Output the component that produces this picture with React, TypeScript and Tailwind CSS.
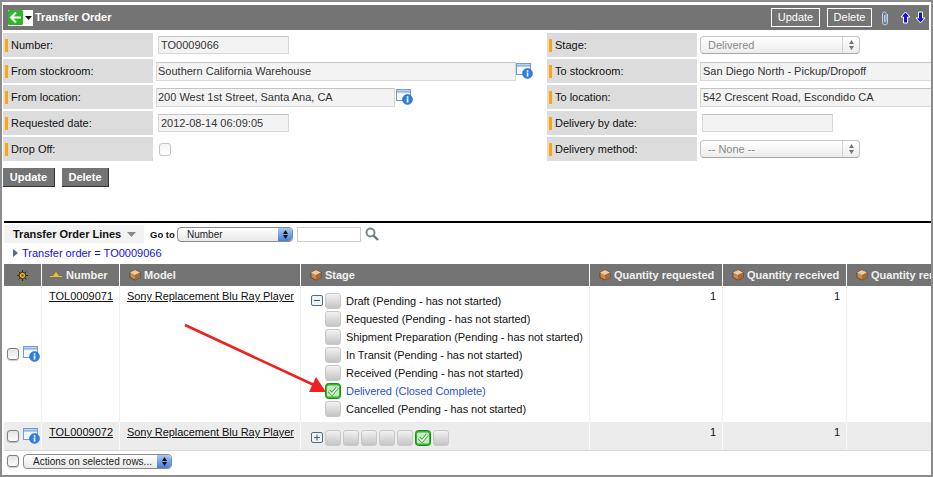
import React from "react";

const font = { fontFamily: '"Liberation Sans", Arial, sans-serif' };

function InfoIcon() {
  return (
    <svg width="17" height="16" viewBox="0 0 17 16" className="shrink-0">
      <rect x="0.5" y="0.5" width="14" height="11" fill="#f4f8fd" stroke="#6f9bd8" />
      <rect x="0.5" y="0.5" width="14" height="2.5" fill="#bcd3f2" stroke="#6f9bd8" />
      <circle cx="11.5" cy="10.5" r="5" fill="#2f7de0" stroke="#1f5fb8" strokeWidth="0.5" />
      <rect x="10.7" y="9.5" width="1.7" height="4" fill="#fff" />
      <rect x="10.7" y="7.3" width="1.7" height="1.5" fill="#fff" />
    </svg>
  );
}

function Cube() {
  return (
    <svg width="12" height="12" viewBox="0 0 12 12" className="shrink-0">
      <path d="M6 1 L11 3.5 L11 8.5 L6 11 L1 8.5 L1 3.5 Z" fill="#c98a50" stroke="#3a2a1a" strokeWidth="0.6" />
      <path d="M6 1 L11 3.5 L6 6 L1 3.5 Z" fill="#eecb9f" />
      <path d="M6 6 L11 3.5 L11 8.5 L6 11 Z" fill="#a86a35" />
    </svg>
  );
}

function MacCheck({ light }: { light?: boolean }) {
  return (
    <span
      className={
        light
          ? "block w-[12px] h-[13px] rounded-[3px] border border-[#c4c4c4] bg-gradient-to-b from-[#f4f4f4] to-[#ffffff] shrink-0"
          : "block w-[12px] h-[12px] rounded-[3px] border border-[#7f7f7f] bg-gradient-to-b from-[#e4e4e4] to-[#fbfbfb] shadow-[0_1px_1px_rgba(0,0,0,0.2)] shrink-0"
      }
    />
  );
}

function StageBox({ done }: { done?: boolean }) {
  if (done) {
    return (
      <svg width="16" height="16" viewBox="0 0 16 16" className="shrink-0">
        <rect x="0.5" y="0.5" width="15" height="15" rx="3" fill="#35b52e" stroke="#1f8a1a" />
        <rect x="2" y="2.5" width="12" height="11" rx="1.5" fill="#c4ecc0" />
        <path d="M4 8 L7 11 L12.5 4.5" fill="none" stroke="#2f9f28" strokeWidth="3.2" />
        <path d="M4 8 L7 11 L12.5 4.5" fill="none" stroke="#ffffff" strokeWidth="1.6" />
      </svg>
    );
  }
  return <span className="block w-[16px] h-[16px] rounded-[3px] border border-[#c8c8c8] bg-gradient-to-b from-[#f2f2f2] to-[#c4c4c4] shrink-0" />;
}

function Toggle({ plus }: { plus?: boolean }) {
  return (
    <svg width="12" height="12" viewBox="0 0 12 12" className="shrink-0">
      <rect x="0.5" y="0.5" width="11" height="10" rx="1.5" fill="#eef2f5" stroke="#4f6b80" />
      <path d="M3 5.5 H9" stroke="#3f5b70" />
      {plus && <path d="M6 2.5 V8.5" stroke="#3f5b70" />}
    </svg>
  );
}

function Label({ text }: { text: string }) {
  return (
    <div className="w-[150px] h-[24px] bg-[#dcdcdc] flex items-center shrink-0 pl-[2px] text-[#111]">
      <span className="w-[3px] h-[13px] bg-[#fca60d] mr-[3px]" />
      <span>{text}</span>
    </div>
  );
}

function TextBox({ value, w, ml, h = "h-[18px]", pad = "pl-[1px]" }: { value: string; w: string; ml: string; h?: string; pad?: string }) {
  return (
    <div className={`${w} ${ml} ${h} ${pad} flex items-center bg-[#f3f3f3] border border-[#d8d8d8] border-t-[#c4c4c4] text-[#333] shrink-0`}>
      {value}
    </div>
  );
}

function GreySelect({ value }: { value: string }) {
  return (
    <div className="ml-[3px] w-[160px] h-[18px] rounded-[4px] border border-[#c4c4c4] border-b-[#a8a8a8] bg-gradient-to-b from-[#ffffff] to-[#ececec] flex items-center text-[#8a8a8a] pl-[7px] relative">
      <span className="grow">{value}</span>
      <span className="w-[17px] h-full border-l border-[#d4d4d4] flex flex-col items-center justify-center gap-[2px]">
        <svg width="5" height="4" viewBox="0 0 5 4"><path d="M2.5 0 L5 4 L0 4 Z" fill="#777" /></svg>
        <svg width="5" height="4" viewBox="0 0 5 4"><path d="M2.5 4 L5 0 L0 0 Z" fill="#777" /></svg>
      </span>
    </div>
  );
}

function BlueStepper() {
  return (
    <span className="w-[14px] h-full rounded-r-[4px] bg-gradient-to-b from-[#a9c9f2] to-[#3f7fd8] flex flex-col items-center justify-center gap-[1px] shrink-0">
      <svg width="5" height="4" viewBox="0 0 5 4"><path d="M2.5 0 L5 4 L0 4 Z" fill="#111" /></svg>
      <svg width="5" height="4" viewBox="0 0 5 4"><path d="M2.5 4 L5 0 L0 0 Z" fill="#111" /></svg>
    </span>
  );
}

function FormRow({ children }: { children: React.ReactNode }) {
  return <div className="flex items-center h-[24px] mb-[2px]">{children}</div>;
}

function GreyButton({ text, w }: { text: string; w: string }) {
  return (
    <div className={`${w} h-[19px] bg-[#747474] border-b border-r border-[#333] text-white font-bold flex items-center justify-center`}>
      {text}
    </div>
  );
}

function HeadCell({ w, children, noBorder }: { w: string; children: React.ReactNode; noBorder?: boolean }) {
  return (
    <div className={`${w} shrink-0 h-full flex items-center ${noBorder ? "" : "border-r border-white"} text-[#f1f1f1] font-bold overflow-hidden whitespace-nowrap`}>
      {children}
    </div>
  );
}

const stages: [string, boolean][] = [
  ["Draft (Pending - has not started)", false],
  ["Requested (Pending - has not started)", false],
  ["Shipment Preparation (Pending - has not started)", false],
  ["In Transit (Pending - has not started)", false],
  ["Received (Pending - has not started)", false],
  ["Delivered (Closed Complete)", true],
  ["Cancelled (Pending - has not started)", false],
];

function BodyRow({ bg, h, pt, number, stage }: { bg: string; h: string; pt: string; number: string; stage: React.ReactNode }) {
  const cell = "shrink-0 h-full border-r";
  const line = bg === "bg-white" ? "border-[#efefef]" : "border-[#fafafa]";
  return (
    <div className={`flex ${bg} ${h} text-[#111]`}>
      <div className={`${cell} ${line} w-[38px] flex items-center gap-[4px] pl-[3px]`}>
        <MacCheck />
        <InfoIcon />
      </div>
      <div className={`${cell} ${line} w-[78px] pl-[7px] ${pt}`}><span className="underline">{number}</span></div>
      <div className={`${cell} ${line} w-[181px] pl-[7px] tracking-[-0.06px] ${pt}`}><span className="underline">Sony Replacement Blu Ray Player</span></div>
      <div className={`${cell} ${line} w-[289px] tracking-[-0.06px]`}>{stage}</div>
      <div className={`${cell} ${line} w-[133px] text-right pr-[6px] ${pt}`}>1</div>
      <div className={`${cell} ${line} w-[124px] text-right pr-[6px] ${pt}`}>1</div>
      <div className="grow" />
    </div>
  );
}

export default function App() {
  return (
    <div style={font} className="relative w-[933px] h-[477px] box-border border-2 border-[#8c8c8c] bg-white overflow-hidden text-[11px] leading-[13px]">
      <div className="pl-px pt-[3px]">
        {/* Title bar */}
        <div className="h-[25px] mr-[2px] bg-[#747474] flex items-center">
          <div className="ml-[5px] w-[25px] h-[16px] bg-white flex items-center shrink-0">
            <svg width="15" height="15" viewBox="0 0 15 15">
              <rect width="15" height="15" rx="1.5" fill="#2fb52a" />
              <path d="M8 2.5 L3 7.5 L8 12.5 M3 7.5 H13" fill="none" stroke="#fff" strokeWidth="2" />
            </svg>
            <svg width="7" height="4" viewBox="0 0 7 4" className="ml-[2px]"><path d="M0 0 H7 L3.5 4 Z" fill="#111" /></svg>
          </div>
          <span className="ml-[2px] text-white font-bold grow">Transfer Order</span>
          <div className="h-[19px] w-[49px] border border-white text-white flex items-center justify-center">Update</div>
          <div className="ml-[7px] h-[19px] w-[45px] border border-white text-white flex items-center justify-center">Delete</div>
          <svg width="10" height="16" viewBox="0 0 10 16" className="ml-[8px]">
            <path d="M7.5 4 V12 A2.5 3 0 0 1 2.5 12 V3.5 A1.8 2 0 0 1 6 3.5 V11 A0.8 1 0 0 1 4.4 11 V5" fill="none" stroke="#bcd2ee" strokeWidth="1" />
          </svg>
          <svg width="11" height="13" viewBox="0 0 11 13" className="ml-[10px]">
            <path d="M5.5 1 L10 6 H7.5 V12 H3.5 V6 H1 Z" fill="#1414e0" stroke="#fff" strokeWidth="1" />
          </svg>
          <svg width="11" height="13" viewBox="0 0 11 13" className="ml-[4px] mr-[3px]">
            <path d="M5.5 12 L10 7 H7.5 V1 H3.5 V7 H1 Z" fill="#1414e0" stroke="#fff" strokeWidth="1" />
          </svg>
        </div>

        {/* Form */}
        <div className="flex mt-[3px]">
          <div className="w-[544px] shrink-0">
            <FormRow><Label text="Number:" /><TextBox value="TO0009066" w="w-[131px]" ml="ml-[5px]" pad="pl-[2px]" /></FormRow>
            <FormRow><Label text="From stockroom:" /><TextBox value="Southern California Warehouse" w="w-[360px]" ml="ml-[3px]" h="h-[19px]" /><InfoIcon /></FormRow>
            <FormRow><Label text="From location:" /><TextBox value="200 West 1st Street, Santa Ana, CA" w="w-[239px]" ml="ml-[3px]" h="h-[19px]" /><span className="ml-[1px]"><InfoIcon /></span></FormRow>
            <FormRow><Label text="Requested date:" /><TextBox value="2012-08-14 06:09:05" w="w-[131px]" ml="ml-[5px]" pad="pl-[2px]" /></FormRow>
            <FormRow>
              <Label text="Drop Off:" />
              <span className="ml-[6px]"><MacCheck light /></span>
            </FormRow>
          </div>
          <div className="grow min-w-0 overflow-hidden">
            <FormRow><Label text="Stage:" /><GreySelect value="Delivered" /></FormRow>
            <FormRow><Label text="To stockroom:" /><TextBox value="San Diego North - Pickup/Dropoff" w="w-[240px]" ml="ml-[3px]" h="h-[19px]" pad="pl-[2px]" /></FormRow>
            <FormRow><Label text="To location:" /><TextBox value="542 Crescent Road, Escondido CA" w="w-[240px]" ml="ml-[3px]" h="h-[19px]" pad="pl-[2px]" /></FormRow>
            <FormRow><Label text="Delivery by date:" /><TextBox value="" w="w-[131px]" ml="ml-[5px]" /></FormRow>
            <FormRow><Label text="Delivery method:" /><GreySelect value="-- None --" /></FormRow>
          </div>
        </div>

        {/* Form buttons */}
        <div className="flex gap-[7px] mt-[5px]">
          <GreyButton text="Update" w="w-[52px]" />
          <GreyButton text="Delete" w="w-[47px]" />
        </div>

        {/* Related list */}
        <div className="ml-px mt-[34px]">
          <div className="h-[2px] bg-black" />
          <div className="flex items-center mt-[2px] h-[18px]">
            <div className="w-[140px] h-full bg-[#f2f2f2] flex items-center pl-[9px] text-[#111] font-bold shrink-0">
              <span>Transfer Order Lines</span>
              <svg width="9" height="5" viewBox="0 0 9 5" className="ml-[6px]"><path d="M0 0 H9 L4.5 5 Z" fill="#8a8a8a" /></svg>
            </div>
            <span className="ml-[6px] text-[9.5px] font-bold text-[#111] w-[27px] shrink-0">Go to</span>
            <div className="w-[116px] h-[15px] rounded-[4px] border border-[#8a8a8a] bg-gradient-to-b from-[#ffffff] to-[#e8e8e8] flex items-center text-[10px] text-[#222] shrink-0">
              <span className="grow pl-[9px]">Number</span>
              <BlueStepper />
            </div>
            <div className="ml-[4px] w-[64px] h-[15px] border border-[#cfcfcf] bg-white shrink-0" />
            <svg width="14" height="14" viewBox="0 0 14 14" className="ml-[4px]">
              <circle cx="5.5" cy="5.5" r="4" fill="none" stroke="#7a8a8a" strokeWidth="2" />
              <path d="M8.5 8.5 L13 13" stroke="#6a7a7a" strokeWidth="2.4" />
            </svg>
          </div>
          <div className="flex items-center h-[14px] mt-[3px] text-[#0f0fe8] pl-[9px]">
            <svg width="5" height="8" viewBox="0 0 5 8" className="mr-[4px]"><path d="M0 0 L5 4 L0 8 Z" fill="#5a6a7a" /></svg>
            <span>Transfer order = TO0009066</span>
          </div>

          {/* Table */}
          <div className="mt-[4px]">
            <div className="h-[22px] bg-[#747474] flex">
              <HeadCell w="w-[38px] justify-center">
                <svg width="11" height="11" viewBox="0 0 11 11">
                  <circle cx="5.5" cy="5.5" r="3.2" fill="#e8b820" stroke="#3a2a10" />
                  <circle cx="5.5" cy="5.5" r="1.2" fill="#8a5a10" />
                  <path d="M5.5 0 V2 M5.5 9 V11 M0 5.5 H2 M9 5.5 H11 M1.6 1.6 L3 3 M8 8 L9.4 9.4 M9.4 1.6 L8 3 M3 8 L1.6 9.4" stroke="#2a2a10" />
                </svg>
              </HeadCell>
              <HeadCell w="w-[78px] pl-[8px]">
                <svg width="12" height="6" viewBox="0 0 12 6" className="mr-[4px]"><path d="M6 0 L9 4 H12 V5 H0 V4 H3 Z" fill="#f0c020" /></svg>
                Number
              </HeadCell>
              <HeadCell w="w-[181px] pl-[9px]"><Cube /><span className="ml-[3px]">Model</span></HeadCell>
              <HeadCell w="w-[289px] pl-[9px]"><Cube /><span className="ml-[3px]">Stage</span></HeadCell>
              <HeadCell w="w-[133px] pl-[9px]"><Cube /><span className="ml-[3px]">Quantity requested</span></HeadCell>
              <HeadCell w="w-[124px] pl-[9px]"><Cube /><span className="ml-[3px]">Quantity received</span></HeadCell>
              <HeadCell w="grow min-w-0 pl-[9px]" noBorder><Cube /><span className="ml-[3px]">Quantity remaining</span></HeadCell>
            </div>
            <BodyRow
              bg="bg-white"
              h="h-[136px]"
              pt="pt-[4px]"
              number="TOL0009071"
              stage={
                <div className="pt-[6px] pl-[10px]">
                  {stages.map(([t, done], i) => (
                    <div key={t} className="flex items-center h-[18px]">
                      <span className="w-[14px] shrink-0">{i === 0 && <Toggle />}</span>
                      <StageBox done={done} />
                      <span className={`ml-[5px] whitespace-nowrap ${done ? "text-[#2a52d8]" : ""}`}>{t}</span>
                    </div>
                  ))}
                </div>
              }
            />
            <BodyRow
              bg="bg-[#ececec]"
              h="h-[28px]"
              pt="pt-[4px]"
              number="TOL0009072"
              stage={
                <div className="flex items-center h-full pl-[10px] pt-[4px]">
                  <span className="w-[14px] shrink-0"><Toggle plus /></span>
                  <div className="flex gap-[2px]">
                    <StageBox /><StageBox /><StageBox /><StageBox /><StageBox /><StageBox done /><StageBox />
                  </div>
                </div>
              }
            />
            <div className="h-px bg-[#d8d8d8]" />
          </div>

          {/* Footer actions */}
          <div className="flex items-center h-[20px] pl-[3px] gap-[4px]">
            <MacCheck />
            <div className="w-[149px] h-[15px] rounded-[4px] border border-[#8a8a8a] bg-gradient-to-b from-[#ffffff] to-[#e8e8e8] flex items-center text-[10px] text-[#222] whitespace-nowrap shrink-0">
              <span className="grow pl-[9px]">Actions on selected rows...</span>
              <BlueStepper />
            </div>
          </div>
        </div>
      </div>

      {/* Annotation arrow */}
      <svg width="933" height="477" viewBox="0 0 933 477" className="absolute left-[-2px] top-[-2px] pointer-events-none">
        <path d="M185 325 L314 385" stroke="#ee2020" strokeWidth="2.6" fill="none" />
        <path d="M326 392 L309 392 L316 377 Z" fill="#ee2020" />
      </svg>
    </div>
  );
}
